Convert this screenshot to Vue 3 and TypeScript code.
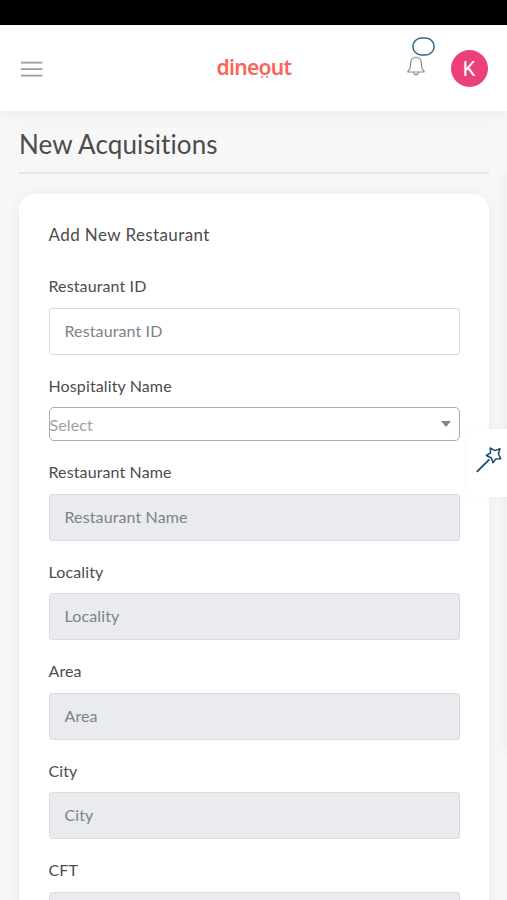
<script setup lang="ts">
interface Field {
  label: string
  kind: 'input' | 'select'
  placeholder: string
  disabled?: boolean
}

const fields: Field[] = [
  { label: 'Restaurant ID', kind: 'input', placeholder: 'Restaurant ID' },
  { label: 'Hospitality Name', kind: 'select', placeholder: 'Select' },
  { label: 'Restaurant Name', kind: 'input', placeholder: 'Restaurant Name', disabled: true },
  { label: 'Locality', kind: 'input', placeholder: 'Locality', disabled: true },
  { label: 'Area', kind: 'input', placeholder: 'Area', disabled: true },
  { label: 'City', kind: 'input', placeholder: 'City', disabled: true },
  { label: 'CFT', kind: 'input', placeholder: '', disabled: true },
]
</script>

<template>
  <div class="screen">
    <div class="status-bar"></div>
    <header class="header">
      <button class="menu" aria-label="Menu">
        <svg width="22" height="16" viewBox="0 0 22 16">
          <path d="M0 1.7H21.4M0 8.2H21.4M0 14.7H21.4" stroke="#9b9b9b" stroke-width="1.7" />
        </svg>
      </button>
      <div class="logo">
        dine<span class="logo-o">o<i class="dots"></i></span>ut
      </div>
      <div class="actions">
        <div class="bell">
          <svg width="18" height="20" viewBox="0 0 18 20" fill="none" stroke="#8d8d8d" stroke-width="1.2" stroke-linejoin="round">
            <path d="M9 1.4V.4M9 1.5C5.7 1.5 3.7 3.8 3.7 7C3.7 11.7 3 13.6.9 15.2V16H17.1V15.2C15 13.6 14.3 11.7 14.3 7C14.3 3.8 12.3 1.5 9 1.5Z" />
            <path d="M6.8 16.2C6.8 19.6 11.2 19.6 11.2 16.2" />
          </svg>
          <svg class="badge" width="23" height="19" viewBox="0 0 23 19">
            <rect x=".9" y=".9" width="21.2" height="17.2" rx="8.6" fill="none" stroke="#2d648c" stroke-width="1.5" />
          </svg>
        </div>
        <div class="avatar">K</div>
      </div>
    </header>
    <main class="main">
      <h1 class="title">New Acquisitions</h1>
      <section class="card">
        <h2 class="card-title">Add New Restaurant</h2>
        <div v-for="field in fields" :key="field.label" class="field">
          <label class="label">{{ field.label }}</label>
          <div v-if="field.kind === 'select'" class="select">
            <span>{{ field.placeholder }}</span>
            <svg width="10" height="6" viewBox="0 0 10 6"><path d="M0 0H10L5 6Z" fill="#858585" /></svg>
          </div>
          <div v-else class="input" :class="{ disabled: field.disabled }">{{ field.placeholder }}</div>
        </div>
      </section>
    </main>
    <div class="drawer-edge"></div>
    <button class="wand" aria-label="Customize">
      <svg width="26" height="26" viewBox="0 0 26 26" fill="none" stroke="#174a70" stroke-width="1.5" stroke-linejoin="round">
        <path d="M.8 24.9L13.4 12.4" stroke-width="1.8" />
        <path d="M14.2 1L18.9 3.6L24 1.8L22.4 7L24.7 11.7L19.8 11.9L17 15.8L15.4 11L10.4 8.5L14.6 5.9Z" />
      </svg>
    </button>
  </div>
</template>

<style>
body {
  background: #f7f7f7;
  overflow: hidden;
}
</style>

<style scoped>
.screen {
  position: relative;
  display: flex;
  flex-direction: column;
  height: 900px;
  overflow: hidden;
  background: #f7f7f7;
  color: #4c4c4c;
  font-family: Lato, "Liberation Sans", sans-serif;
  font-size: 16px;
  letter-spacing: 0.12px;
}
.status-bar {
  flex: none;
  height: 25px;
  background: #000;
}
.header {
  flex: none;
  display: grid;
  grid-template-columns: 1fr auto 1fr;
  align-items: center;
  height: 86px;
  box-sizing: border-box;
  padding: 0 20px 0 21px;
  background: #fff;
  box-shadow: 0 0 18px rgba(0, 0, 0, 0.07);
}
button {
  border: 0;
  padding: 0;
  background: none;
}
.menu {
  display: flex;
  justify-self: start;
  padding-top: 2px;
}
.logo {
  font-family: "Noto Sans", sans-serif;
  font-size: 21px;
  font-weight: 600;
  line-height: 28px;
  letter-spacing: -0.7px;
  color: #f8665e;
  padding-bottom: 3px;
}
.logo-o {
  position: relative;
}
.dots {
  position: absolute;
  left: 2px;
  bottom: 3px;
  width: 2px;
  height: 2px;
  border-radius: 1px;
  background: #f8665e;
  box-shadow: 5px 0 #f8665e;
}
.actions {
  display: flex;
  justify-self: end;
  align-items: center;
  gap: 25.5px;
  margin-right: -0.5px;
}
.bell {
  position: relative;
  display: flex;
  padding-bottom: 5px;
}
.badge {
  position: absolute;
  left: 4.5px;
  top: -19px;
}
.avatar {
  width: 37px;
  height: 37px;
  border-radius: 50%;
  background: #ec407a;
  color: #fff;
  font-family: Roboto, sans-serif;
  font-size: 20px;
  line-height: 38px;
  text-align: center;
}
.main {
  padding: 0 18px 0 19px;
}
.title {
  margin: 0 0 20px;
  height: 63px;
  box-sizing: border-box;
  padding-top: 16px;
  border-bottom: 2px solid #e5e5e5;
  font-size: 26px;
  font-weight: 400;
  line-height: 34px;
  letter-spacing: 0.1px;
}
.card {
  height: 760px;
  padding: 29px 29.5px 0;
  border-radius: 16px;
  background: #fff;
  box-shadow: 0 0 14px rgba(0, 0, 0, 0.05);
}
.card-title {
  margin: 0 0 28px;
  font-size: 17px;
  font-weight: 400;
  line-height: 24px;
  letter-spacing: 0.4px;
}
.field {
  display: flex;
  flex-direction: column;
  gap: 10.5px;
  margin-bottom: 20px;
}
.label {
  line-height: 22px;
}
.input,
.select {
  display: flex;
  align-items: center;
  box-sizing: border-box;
}
.input {
  height: 47px;
  padding: 0 15px 2px;
  border: 1px solid #d9dcde;
  border-radius: 3px;
  color: #7c8388;
}
.disabled {
  background: #e9ebee;
}
.select {
  justify-content: space-between;
  height: 34px;
  padding: 0 8px 0 0;
  border: 1px solid #aaa;
  border-radius: 5px;
  color: #a0a0a0;
}
.drawer-edge {
  position: absolute;
  top: 173px;
  right: -10px;
  width: 10px;
  height: 580px;
  box-shadow: 0 0 14px rgba(0, 0, 0, 0.08);
}
.wand {
  position: absolute;
  top: 429px;
  right: 0;
  display: flex;
  align-items: center;
  width: 39px;
  height: 68px;
  padding: 0 0 7px 8px;
  border-radius: 4px 0 0 4px;
  background: #fff;
  box-shadow: 0 0 8px rgba(0, 0, 0, 0.03);
}
</style>
